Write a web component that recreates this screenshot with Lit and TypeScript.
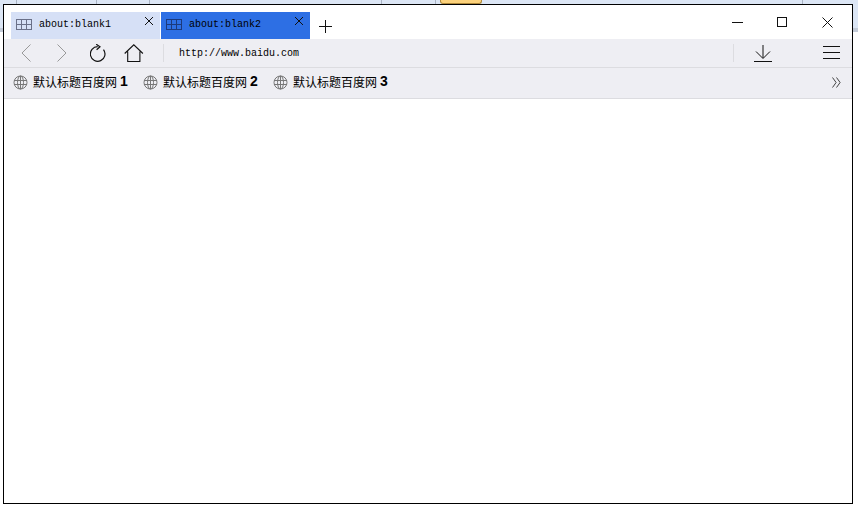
import { LitElement, html, css } from "lit";
import { customElement } from "lit/decorators.js";

const strip = [
  { w: 17, cls: "seg" },
  { w: 80, cls: "seg" },
  { w: 53, cls: "seg" },
  { w: 232, cls: "seg" },
  { w: 54, cls: "seg" },
  { w: 4, cls: "gap" },
  { w: 42, cls: "tabtip" },
  { w: 321, cls: "seg" },
  { w: 55, cls: "gap" },
];

const gridIcon = (color: string) => html`<svg class="grid" width="16" height="11" viewBox="0 0 16 11" fill="none" stroke="${color}" stroke-width="1" shape-rendering="crispEdges">
  <rect x="0.5" y="0.5" width="15" height="10"/><path d="M5.5 1v9M10.5 1v9M1 5.5h14"/></svg>`;

const closeIcon = html`<svg class="x" width="10" height="10" viewBox="0 0 10 10" fill="none" stroke="#111" stroke-width="1"><path d="M1 1l8 8M9 1l-8 8"/></svg>`;

const globe = html`<svg class="globe" width="15" height="15" viewBox="0 0 15 15" fill="none" stroke="#777" stroke-width="1">
  <circle cx="7.5" cy="7.5" r="6.5"/><ellipse cx="7.5" cy="7.5" rx="3" ry="6.5"/><path d="M7.5 1v13M1 5.5h13M1 9.5h13"/></svg>`;

@customElement("app-root")
export class AppRoot extends LitElement {
  static styles = css`
    :host {
      display: block;
      width: 858px;
      height: 509px;
      overflow: hidden;
      background: linear-gradient(#dce6f5 0 28px, #c3cbd8 28px 32px, #fff 32px);
    }
    .strip { display: flex; height: 4px; }
    .seg { background: #dce6f5; border-right: 1px solid #aab4c4; box-sizing: border-box; height: 4px; }
    .gap { background: #dce6f5; }
    .tabtip { background: #fcd27c; border: 1px solid #b08a3c; border-top: 0; box-sizing: border-box; border-radius: 0 0 3px 3px; }
    .window {
      width: 850px; height: 500px; margin-left: 3px; box-sizing: border-box;
      border: 1px solid #000; background: #fff;
      display: flex; flex-direction: column;
      font-family: "Liberation Mono", monospace;
    }
    .tabbar { height: 34px; display: flex; align-items: flex-end; padding-left: 7px; }
    .tab {
      width: 149px; height: 27px; margin-right: 1px; box-sizing: border-box;
      display: flex; align-items: center; padding: 0 0 3px 5px;
      position: relative; font-size: 10px; color: #000;
    }
    .tab.a { background: #d6e0f6; }
    .tab.b { background: #2d6fe4; }
    .tab .label { margin: 0 0 0 7px; }
    .tab .x { position: absolute; right: 6px; top: 4px; }
    .plus { margin: 0 0 6px 7px; }
    .winctl { margin-left: auto; display: flex; align-self: flex-start; padding-top: 12px; }
    .winctl svg { display: block; }
    .toolbar {
      height: 28px; background: #eeeef3; border-bottom: 1px solid #dcdce0;
      display: flex; align-items: center; padding-left: 17px;
    }
    .toolbar svg { display: block; flex: none; }
    .divider { width: 1px; height: 18px; background: #dcdce0; flex: none; }
    .url { font-size: 10px; color: #000; margin-left: 15px; }
    .tool-right { margin-left: auto; display: flex; align-items: center; }
    .bookmarks {
      background: #eeeef3; border-bottom: 1px solid #dcdce0; box-sizing: border-box;
      display: flex; align-items: center; padding: 0 0 2px 9px; height: 31px;
    }
    .bm { display: flex; align-items: center; width: 130px; flex: none; }
    .bm .name {
      margin: 0 0 1px 5px; font: 12px/15px "Noto Sans CJK SC", sans-serif; color: #000; display: flex; align-items: center;
    }
    .bm .n { font: bold 14px/15px "Liberation Sans", sans-serif; margin-left: 3px; }
    .more { margin-left: auto; margin-right: 11px; }
    .body { flex: 1; background: #fff; }
  `;

  render() {
    return html`
      <div class="strip">
        ${strip.map((s) => html`<div class="${s.cls}" style="width:${s.w}px"></div>`)}
      </div>
      <div class="window">
        <div class="tabbar">
          <div class="tab a">${gridIcon("#6a7088")}<span class="label">about:blank1</span>${closeIcon}</div>
          <div class="tab b">${gridIcon("#1c3a7c")}<span class="label">about:blank2</span>${closeIcon}</div>
          <svg class="plus" width="14" height="14" viewBox="0 0 14 14" stroke="#111" stroke-width="1" shape-rendering="crispEdges"><path d="M7.5 1v13M1 7.5h13"/></svg>
          <div class="winctl">
            <svg width="11" height="11" viewBox="0 0 11 11" stroke="#111" shape-rendering="crispEdges" style="margin-right:34px"><path d="M0 5.5h11"/></svg>
            <svg width="11" height="11" viewBox="0 0 11 11" fill="none" stroke="#111" shape-rendering="crispEdges" style="margin-right:34px"><rect x=".5" y=".5" width="9" height="9"/></svg>
            <svg width="11" height="11" viewBox="0 0 11 11" fill="none" stroke="#111" style="margin-right:19px"><path d="M.5.5l10 10M10.5.5l-10 10"/></svg>
          </div>
        </div>
        <div class="toolbar">
          <svg width="10" height="18" viewBox="0 0 10 18" fill="none" stroke="#999"><path d="M9.5.5L1 9l8.5 8.5"/></svg>
          <svg style="margin-left:26px" width="10" height="18" viewBox="0 0 10 18" fill="none" stroke="#999"><path d="M.5.5L9 9l-8.5 8.5"/></svg>
          <svg style="margin-left:23px" width="18" height="19" viewBox="0 0 18 19" fill="none" stroke="#111" stroke-width="1.2"><path d="M13.5 5.6A7.3 7.3 0 1 1 7.7 2.7"/><path d="M6.2 .2l3.8 2.6-3.4 3"/></svg>
          <svg style="margin-left:16px" width="20" height="19" viewBox="0 0 20 19" fill="none" stroke="#111" stroke-width="1.1"><path d="M.7 9.5L9.8 .8l9.1 8.7M3.7 7.5V17.5h12.2V7.5"/></svg>
          <div class="divider" style="margin-left:19px"></div>
          <span class="url">http://www.baidu.com</span>
          <div class="tool-right">
            <div class="divider"></div>
            <svg style="margin-left:20px" width="18" height="17" viewBox="0 0 18 17" fill="none" stroke="#111"><path d="M9 0v13M2 6.5l7 7 7-7"/><path d="M0 16.5h18" shape-rendering="crispEdges"/></svg>
            <svg style="margin:0 12px 0 51px" width="17" height="14" viewBox="0 0 17 14" stroke="#111" shape-rendering="crispEdges"><path d="M0 .5h17M0 6.5h17M0 12.5h17"/></svg>
          </div>
        </div>
        <div class="bookmarks">
          ${[1, 2, 3].map(
            (n) => html`<div class="bm">${globe}<span class="name">默认标题百度网<span class="n">${n}</span></span></div>`
          )}
          <svg class="more" width="9" height="11" viewBox="0 0 9 11" fill="none" stroke="#444"><path d="M.5.5l3.6 5-3.6 5M4.5.5l3.6 5-3.6 5"/></svg>
        </div>
        <div class="body"></div>
      </div>
    `;
  }
}
